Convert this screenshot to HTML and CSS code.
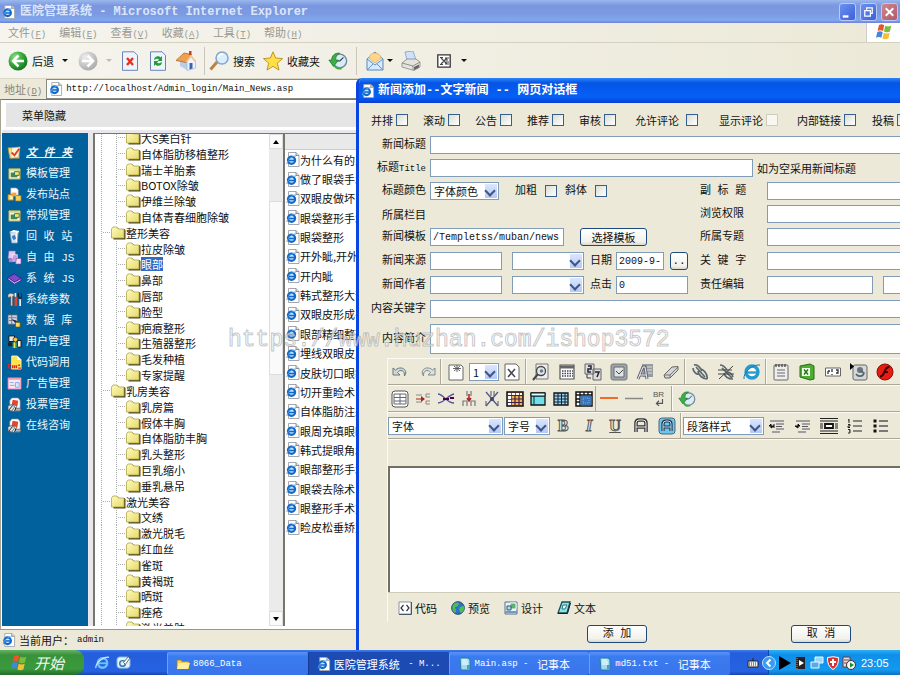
FILE: index.html
```html
<!DOCTYPE html>
<html lang="zh-CN">
<head>
<meta charset="utf-8">
<title>医院管理系统</title>
<link rel="stylesheet" href="styles.css">
</head>
<body>
<svg class="defs" aria-hidden="true">
  <defs>
    <linearGradient id="g-folder" x1="0" y1="0" x2="1" y2="1"><stop offset="0" stop-color="#fffbc0"/><stop offset="1" stop-color="#e6d966"/></linearGradient>
    <radialGradient id="g-green" cx=".35" cy=".3" r=".8"><stop offset="0" stop-color="#8fe08a"/><stop offset=".5" stop-color="#35a83a"/><stop offset="1" stop-color="#0d6b1c"/></radialGradient>
    <radialGradient id="g-gray" cx=".35" cy=".3" r=".8"><stop offset="0" stop-color="#eee"/><stop offset="1" stop-color="#a4a4a4"/></radialGradient>
  </defs>
  <symbol id="folder" viewBox="0 0 15 14"><path d="M2 4.500 1 3l1-1.500h4.500L8 3h5.500l1 1v9.500H2.500z" fill="#4d4a2a"/><path d="M.5 3 2 1h4l1.500 2H13v9H.5z" fill="url(#g-folder)" stroke="#a69b3e" stroke-width=".7"/></symbol>
  <symbol id="iedoc" viewBox="0 0 14 15"><path d="M2.500.5H10L13 3.500v11H2.500z" fill="#fff" stroke="#a3a7b0"/><path d="M10 .5v3h3" fill="#ddd" stroke="#777" stroke-width=".8"/><ellipse cx="5.500" cy="8.300" rx="3.600" ry="3.600" fill="#cfe6fb" stroke="#1268c8" stroke-width="2.200"/><path d="M3 8.500h6" stroke="#1268c8" stroke-width="1.600"/><path d="M.8 12C2 7 6 4 10 4" fill="none" stroke="#53a4ea" stroke-width="1"/></symbol>
  <symbol id="ie" viewBox="0 0 16 16"><circle cx="8" cy="8.500" r="5" fill="none" stroke="#6bc1ff" stroke-width="2.600"/><path d="M4 8.800h9" stroke="#6bc1ff" stroke-width="2"/><path d="M1 14C0 9 9 1 15 2.500" fill="none" stroke="#c5e8ff" stroke-width="1.200"/></symbol>
  <symbol id="flag" viewBox="0 0 18 18"><path d="M4 2c2-1 3.500-.8 5.200.3L8 8C6.500 7 4.500 7 2.600 7.800z" fill="#e8562c"/><path d="M10.200 2.800c2 1 3.800 1 6 0L15 8.500c-2 1-4 .9-6 0z" fill="#7dbb3c"/><path d="M2.300 9c2-1 3.800-.8 5.400.2l-1.300 5.600C5 14 3 13.800 1 14.800z" fill="#4386e0"/><path d="M8.700 9.700c2 1 4 1 6 0l-1.300 5.800c-2 1-4 .9-6 0z" fill="#f5c032"/></symbol>
  <symbol id="clock" viewBox="0 0 22 20"><circle cx="13" cy="10" r="7.500" fill="#d9ecf6" stroke="#71879a" stroke-width="1.500"/><path d="M13 10l4-4M13 10h-4" stroke="#345" stroke-width="1.200" fill="none"/><path d="M1 9h3c0-5 4-8.500 9-7.500C9 3 8.500 6 8.500 9h3l-5.500 7z" fill="#3fae47" stroke="#18722b" stroke-width=".8"/><path d="M7 15c1.500 3 5 4 8 3" fill="none" stroke="#3fae47" stroke-width="2"/></symbol>
  <symbol id="s-check" viewBox="0 0 16 16"><path d="M1 3h5l1 2h6v9H3z" fill="#f6e28b" stroke="#a98b2f" stroke-width=".8"/><path d="M5 3 14 2l-2 11-8 1z" fill="#fff6d5" stroke="#b98" stroke-width=".6"/><path d="m5 8 3 3 5-7" fill="none" stroke="#d8421f" stroke-width="2"/></symbol>
  <symbol id="s-tpl" viewBox="0 0 16 16"><path d="M2 3h12v11H2z" fill="#f8f5d4" stroke="#a79746"/><path d="M2 3h12v2H2z" fill="#c9d88a"/><path d="M4 7h7v5H4z" fill="#3b8a55"/><path d="M8 6h5v4H8z" fill="#f7e36b" stroke="#376"/></symbol>
  <symbol id="s-site" viewBox="0 0 16 16"><path d="M4 1h6l2 2v6H4z" fill="#fff" stroke="#999" stroke-width=".7"/><path d="M1 8h6v6H1zM9 9h6v6H9z" fill="#f5cf58" stroke="#96701b" stroke-width=".7"/><path d="M5 6h5v4H5z" fill="#f4a33c"/><path d="M3 10h3v3H3z" fill="#fff4c6"/></symbol>
  <symbol id="s-bin" viewBox="0 0 16 16"><path d="M3 3h9l-1 12H5z" fill="#d5e2ef" stroke="#8197ad" stroke-width=".8"/><path d="M3 3 7 1l6 1-1 2z" fill="#fff"/><path d="M5 8l3-2 2 4-3 2z" fill="#3c79c7"/><path d="M10 3v11" stroke="#fff"/></symbol>
  <symbol id="s-js" viewBox="0 0 16 16"><path d="M2 1h7v8H1z" fill="#e4c9f4" stroke="#8861a5" stroke-width=".7"/><path d="M6 5h5v7H5z" fill="#c79ae2" stroke="#fff" stroke-width=".7"/><path d="M10 9h5v6H9z" fill="#f0def9" stroke="#754b93" stroke-width=".7"/><path d="M2 9h4v4H2z" fill="#b280d3"/></symbol>
  <symbol id="s-book" viewBox="0 0 16 16"><path d="M1 7 8 3l7 5-7 4z" fill="#7a4cc9" stroke="#3c1a85" stroke-width=".8"/><path d="M1 7v2l7 5 7-4V8l-7 4z" fill="#d9c8ff" stroke="#3c1a85" stroke-width=".8"/></symbol>
  <symbol id="s-tools" viewBox="0 0 16 16"><path d="M1 3c3-3 5-1 7 0l-2 2v10H4V5L1 6z" fill="#ddd" stroke="#543" stroke-width=".6"/><path d="M8 5h3v10H8z" fill="#df4230"/><path d="M9 1v4M14 7v8" stroke="#eee" stroke-width="1.800"/><path d="M12 1v4l2 2 2-2V1" fill="none" stroke="#222" stroke-width="1.500"/></symbol>
  <symbol id="s-db" viewBox="0 0 16 16"><path d="M1 2h10v10H1z" fill="#cfd5e8" stroke="#555" stroke-width=".8"/><path d="M2 5h8M2 8h8M5 2v10" stroke="#667" stroke-width=".8"/><path d="m5 6 6 3-2 2z" fill="#141d66"/><path d="M9 10h5v5H9z" fill="#f5e05f" stroke="#665310" stroke-width=".8"/></symbol>
  <symbol id="s-user" viewBox="0 0 16 16"><path d="M2 2h6v6H2z" fill="#e7e7e7" stroke="#111"/><path d="M1 9h5v4H1z" fill="#222"/><circle cx="9" cy="6" r="2.500" fill="#f3c54b" stroke="#222" stroke-width=".7"/><path d="M6 9h6v6H6z" fill="#3aa75d"/><path d="M11 7h4v7h-4z" fill="#f4f4f4" stroke="#111"/><path d="M8 9v6" stroke="#f2e04e" stroke-width="1.500"/></symbol>
  <symbol id="s-code" viewBox="0 0 16 16"><path d="M5 1h6l4 4v10H5z" fill="#ffe34a" stroke="#fff" stroke-width=".8"/><path d="M11 1v4h4" fill="#fff"/><path d="M4 10c-3-1-4 4 0 4m2-3v3m2-3v3m2-3v3m2-3h2m-2 3h3" fill="none" stroke="#df2720" stroke-width="1.500"/></symbol>
  <symbol id="s-ad" viewBox="0 0 16 16"><path d="M1 2h14v12H1z" fill="#f8e8ef" stroke="#d59"/><path d="M1 2h14v2H1z" fill="#ef9bb6"/><path d="M3 7h4M3 10h5M9 7h4v5H9z" stroke="#8ba8dd" fill="#dbe6ff"/></symbol>
  <symbol id="s-vote" viewBox="0 0 16 16"><path d="M5 1h7l2 3v11H3V4z" fill="#fff" stroke="#888" stroke-width=".7"/><path d="m6 3 6 1-1 6-6-2z" fill="#e5472d"/><path d="m1 9 6-1 1 3-3 4-4-1zM9 12h6v2H9z" fill="#dbe2e8" stroke="#35424f" stroke-width=".8"/><path d="m2 14 4-5M10 10l-2 5" stroke="#222"/></symbol>
</svg>

<div class="browser">
  <header class="titlebar">
    <svg class="i14"><use href="#iedoc"/></svg>
    <h1>医院管理系统 - Microsoft Internet Explorer</h1>
    <div class="winbtns">
      <button type="button" aria-label="最小化"><svg viewBox="0 0 16 17"><path d="M3 12h6v2.500H3z" fill="#fff"/></svg></button>
      <button type="button" aria-label="还原"><svg viewBox="0 0 16 17"><path d="M6 6V4h6v6h-2M4 7h6v6H4z" fill="none" stroke="#fff" stroke-width="1.300"/></svg></button>
      <button type="button" class="close" aria-label="关闭"><svg viewBox="0 0 16 17"><path d="m4 4.500 8 8m0-8-8 8" stroke="#fff" stroke-width="2"/></svg></button>
    </div>
  </header>
  <nav class="menubar">
    <button type="button">文件<span>(<u>F</u>)</span></button>
    <button type="button">编辑<span>(<u>E</u>)</span></button>
    <button type="button">查看<span>(<u>V</u>)</span></button>
    <button type="button">收藏<span>(<u>A</u>)</span></button>
    <button type="button">工具<span>(<u>T</u>)</span></button>
    <button type="button">帮助<span>(<u>H</u>)</span></button>
    <span class="throbber"><svg class="i18"><use href="#flag"/></svg></span>
  </nav>
  <div class="toolbar">
    <button type="button" class="t-back"><svg class="i20" viewBox="0 0 20 20"><circle cx="10" cy="10" r="9.500" fill="url(#g-green)"/><path d="M10.500 4.500 5 10l5.500 5.500M5.500 10H16" fill="none" stroke="#fff" stroke-width="2.500"/></svg>后退<i class="caret"></i></button>
    <button type="button" class="t-fwd" aria-label="前进"><svg class="i20" viewBox="0 0 20 20"><circle cx="10" cy="10" r="9.500" fill="url(#g-gray)"/><path d="M9.500 4.500 15 10l-5.500 5.500M14.500 10H4" fill="none" stroke="#fff" stroke-width="2.500"/></svg><i class="caret dim"></i></button>
    <button type="button" class="t-ico" aria-label="停止"><svg class="i20" viewBox="0 0 20 20"><path d="M2.500.8H14l3.500 3.500v15h-15z" fill="#eef4fd" stroke="#6d83b5"/><path d="m7 7 6 7m0-7-6 7" stroke="#e8301c" stroke-width="2.400"/></svg></button>
    <button type="button" class="t-ico" aria-label="刷新"><svg class="i20" viewBox="0 0 20 20"><path d="M2.500.8H14l3.500 3.500v15h-15z" fill="#eef4fd" stroke="#6d83b5"/><path d="M6 9c0-4 5-5 6.500-2.500L14 5v5H9.500l1.500-1.500C10 7 7.500 8 6 9zM14 11c0 4-5 5-6.500 2.500L6 15v-5h4.500L9 11.500c1 1.500 3.500.5 5-.5z" fill="#249a38"/></svg></button>
    <button type="button" class="t-ico" aria-label="主页"><svg class="i20" viewBox="0 0 20 20"><path d="M4 9v6l7 4V10z" fill="#b9cdec"/><path d="M11 10 15.500 5l4 5v7L11 19.500z" fill="#eef4ff" stroke="#8fa9cf" stroke-width=".6"/><path d="M0 9.500 8 2l7.500 1.500-5.500 8z" fill="#efa04e" stroke="#a75f22" stroke-width=".7"/><path d="M13 0h2.500v4H13z" fill="#c94032"/><path d="m15 3.500 5 7-1.500.5-3.500-4.500-4 5-1.500-.5z" fill="#f7c68c"/><path d="M13.500 12h3v5.500l-3 1z" fill="#3666a7"/></svg></button>
    <span class="sep"></span>
    <button type="button" class="t-txt"><svg class="i20" viewBox="0 0 20 20"><path d="m1.500 18.500 7-8" stroke="#ba8345" stroke-width="3"/><circle cx="13" cy="7" r="6" fill="#d9efff" stroke="#87a5c9" stroke-width="1.500"/><path d="M9.500 6C10 4 12 3 14 3.500" fill="none" stroke="#fff" stroke-width="1.500"/></svg>搜索</button>
    <button type="button" class="t-txt"><svg class="i20" viewBox="0 0 20 20"><path d="m10 .8 2.600 6.200 7 .6-5.300 4.500 1.700 7-6-3.800-6 3.800 1.700-7L.4 7.600l7-.6z" fill="#ffdf48" stroke="#b98d1c" stroke-width=".9"/></svg>收藏夹</button>
    <button type="button" class="t-ico" aria-label="历史"><svg class="i20"><use href="#clock"/></svg></button>
    <span class="sep"></span>
    <button type="button" class="t-mail" aria-label="邮件"><svg class="i20" viewBox="0 0 20 20"><path d="M2 8 10 1l8 7v11H2z" fill="#d8eafc" stroke="#5d87b9"/><path d="M4 7c0-3 3-5 6-5s6 2 6 5l-6 5z" fill="#ffd58c" stroke="#e0a050" stroke-width=".6"/><path d="m2 8 8 6 8-6M2 19l6-6m10 6-6-6" fill="none" stroke="#5d97d1"/></svg><i class="caret"></i></button>
    <button type="button" class="t-print" aria-label="打印"><svg class="i20" viewBox="0 0 20 20"><path d="M4 1l8-1 3 9H6z" fill="#cfe2fb" stroke="#7f9cc5" stroke-width=".8"/><path d="m1 12 5-4h9l4 3v5l-6 3.500L1 16z" fill="#e3e3e0" stroke="#858580" stroke-width=".8"/><path d="M1 12l11 3 7-4M12 15v4" fill="none" stroke="#90908a"/><path d="m13 16 5-2.500v3L13 19z" fill="#666"/></svg></button>
    <button type="button" class="t-excel" aria-label="用 Excel 编辑"><svg class="i14" viewBox="0 0 14 14"><path d="M.8.8h12.400v12.400H.8z" fill="#fff" stroke="#333" stroke-width="1.300"/><path d="m4 4 6 6M10 4l-6 6M3 3.500h3M3 10.500h3M8 4h4M8 6h3M8 8h4M8 10h4" stroke="#444" stroke-width="1.100"/></svg></button>
    <i class="caret"></i>
  </div>
  <div class="address">
    <label for="url">地址<span>(<u>D</u>)</span></label>
    <div class="urlbox"><svg class="i14"><use href="#iedoc"/></svg><input id="url" type="text" value="http://localhost/Admin_login/Main_News.asp"></div>
  </div>

  <div class="page">
    <div class="topframe"><button type="button">菜单隐藏</button></div>
    <div class="cols">
      <nav class="side">
        <a href="#" class="on"><svg class="i15"><use href="#s-check"/></svg><b>文 件 夹</b></a>
        <a href="#"><svg class="i15"><use href="#s-tpl"/></svg>模板管理</a>
        <a href="#"><svg class="i15"><use href="#s-site"/></svg>发布站点</a>
        <a href="#"><svg class="i15"><use href="#s-tpl"/></svg>常规管理</a>
        <a href="#"><svg class="i15"><use href="#s-bin"/></svg>回 收 站</a>
        <a href="#"><svg class="i15"><use href="#s-js"/></svg>自 由 JS</a>
        <a href="#"><svg class="i15"><use href="#s-book"/></svg>系 统 JS</a>
        <a href="#"><svg class="i15"><use href="#s-tools"/></svg>系统参数</a>
        <a href="#"><svg class="i15"><use href="#s-db"/></svg>数 据 库</a>
        <a href="#"><svg class="i15"><use href="#s-user"/></svg>用户管理</a>
        <a href="#"><svg class="i15"><use href="#s-code"/></svg>代码调用</a>
        <a href="#"><svg class="i15"><use href="#s-ad"/></svg>广告管理</a>
        <a href="#"><svg class="i15"><use href="#s-vote"/></svg>投票管理</a>
        <a href="#"><svg class="i15"><use href="#s-vote"/></svg>在线咨询</a>
      </nav>
      <div class="treepane">
        <ul class="tree">
          <li class="sub"><svg><use href="#folder"/></svg><span>大S美白针</span></li>
          <li class="sub"><svg><use href="#folder"/></svg><span>自体脂肪移植整形</span></li>
          <li class="sub"><svg><use href="#folder"/></svg><span>瑞士羊胎素</span></li>
          <li class="sub"><svg><use href="#folder"/></svg><span>BOTOX除皱</span></li>
          <li class="sub"><svg><use href="#folder"/></svg><span>伊维兰除皱</span></li>
          <li class="sub"><svg><use href="#folder"/></svg><span>自体青春细胞除皱</span></li>
          <li><svg><use href="#folder"/></svg><span>整形美容</span></li>
          <li class="sub"><svg><use href="#folder"/></svg><span>拉皮除皱</span></li>
          <li class="sub"><svg><use href="#folder"/></svg><span class="sel">眼部</span></li>
          <li class="sub"><svg><use href="#folder"/></svg><span>鼻部</span></li>
          <li class="sub"><svg><use href="#folder"/></svg><span>唇部</span></li>
          <li class="sub"><svg><use href="#folder"/></svg><span>脸型</span></li>
          <li class="sub"><svg><use href="#folder"/></svg><span>疤痕整形</span></li>
          <li class="sub"><svg><use href="#folder"/></svg><span>生殖器整形</span></li>
          <li class="sub"><svg><use href="#folder"/></svg><span>毛发种植</span></li>
          <li class="sub"><svg><use href="#folder"/></svg><span>专家提醒</span></li>
          <li><svg><use href="#folder"/></svg><span>乳房美容</span></li>
          <li class="sub"><svg><use href="#folder"/></svg><span>乳房篇</span></li>
          <li class="sub"><svg><use href="#folder"/></svg><span>假体丰胸</span></li>
          <li class="sub"><svg><use href="#folder"/></svg><span>自体脂肪丰胸</span></li>
          <li class="sub"><svg><use href="#folder"/></svg><span>乳头整形</span></li>
          <li class="sub"><svg><use href="#folder"/></svg><span>巨乳缩小</span></li>
          <li class="sub"><svg><use href="#folder"/></svg><span>垂乳悬吊</span></li>
          <li><svg><use href="#folder"/></svg><span>激光美容</span></li>
          <li class="sub"><svg><use href="#folder"/></svg><span>文绣</span></li>
          <li class="sub"><svg><use href="#folder"/></svg><span>激光脱毛</span></li>
          <li class="sub"><svg><use href="#folder"/></svg><span>红血丝</span></li>
          <li class="sub"><svg><use href="#folder"/></svg><span>雀斑</span></li>
          <li class="sub"><svg><use href="#folder"/></svg><span>黄褐斑</span></li>
          <li class="sub"><svg><use href="#folder"/></svg><span>晒斑</span></li>
          <li class="sub"><svg><use href="#folder"/></svg><span>痤疮</span></li>
          <li class="sub"><svg><use href="#folder"/></svg><span>激光美肤</span></li>
        </ul>
        <div class="scroll"><i class="up"></i><i class="thumb"></i><i class="down"></i></div>
      </div>
      <div class="listpane">
        <div class="listhead"></div>
        <ul class="list">
          <li><svg><use href="#iedoc"/></svg>为什么有的人</li>
          <li><svg><use href="#iedoc"/></svg>做了眼袋手术</li>
          <li><svg><use href="#iedoc"/></svg>双眼皮做坏了</li>
          <li><svg><use href="#iedoc"/></svg>眼袋整形手术</li>
          <li><svg><use href="#iedoc"/></svg>眼袋整形</li>
          <li><svg><use href="#iedoc"/></svg>开外眦,开外眦</li>
          <li><svg><use href="#iedoc"/></svg>开内眦</li>
          <li><svg><use href="#iedoc"/></svg>韩式整形大部</li>
          <li><svg><use href="#iedoc"/></svg>双眼皮形成手</li>
          <li><svg><use href="#iedoc"/></svg>眼部精细整形</li>
          <li><svg><use href="#iedoc"/></svg>埋线双眼皮,</li>
          <li><svg><use href="#iedoc"/></svg>皮肤切口眼袋</li>
          <li><svg><use href="#iedoc"/></svg>切开重睑术</li>
          <li><svg><use href="#iedoc"/></svg>自体脂肪注射</li>
          <li><svg><use href="#iedoc"/></svg>眼周充填眼眶</li>
          <li><svg><use href="#iedoc"/></svg>韩式提眼角术</li>
          <li><svg><use href="#iedoc"/></svg>眼部整形手术</li>
          <li><svg><use href="#iedoc"/></svg>眼袋去除术</li>
          <li><svg><use href="#iedoc"/></svg>眼整形手术方</li>
          <li><svg><use href="#iedoc"/></svg>睑皮松垂矫正</li>
        </ul>
      </div>
    </div>
  </div>
  <footer class="status"><svg class="i14"><use href="#iedoc"/></svg>当前用户：<span>admin</span></footer>
</div>

<section class="dialog" role="dialog" aria-labelledby="dlg-title">
  <header class="dlgbar"><svg class="i14"><use href="#iedoc"/></svg><h2 id="dlg-title">新闻添加--文字新闻 -- 网页对话框</h2></header>
  <form class="dlgbody">
    <div class="checks">
      <label>并排<input type="checkbox"></label>
      <label>滚动<input type="checkbox"></label>
      <label>公告<input type="checkbox"></label>
      <label>推荐<input type="checkbox"></label>
      <label>审核<input type="checkbox"></label>
      <label class="wide">允许评论<input type="checkbox"></label>
      <label>显示评论<input type="checkbox" disabled></label>
      <label>内部链接<input type="checkbox"></label>
      <label>投稿<input type="checkbox"></label>
    </div>

    <div class="rows">
      <div class="row"><label class="lb" for="f1">新闻标题</label><input class="grow" id="f1" type="text"></div>
      <div class="row"><label class="lb" for="f2">标题<span class="en">Title</span></label><input class="w323" id="f2" type="text"><span class="note">如为空采用新闻标题</span></div>
      <div class="row two">
        <div class="cell"><label class="lb" for="f3">标题颜色</label><span class="dd w69"><select id="f3"><option>字体颜色</option></select></span>
          <label class="ck first">加粗<input type="checkbox"></label><label class="ck">斜体<input type="checkbox"></label></div>
        <label for="r3">副 标 题</label><input class="grow" id="r3" type="text">
      </div>
      <div class="row two">
        <div class="cell"><span class="lb">所属栏目</span></div>
        <label for="r4">浏览权限</label><input class="grow" id="r4" type="text">
      </div>
      <div class="row two">
        <div class="cell"><label class="lb" for="f5">新闻模板</label><input class="w133" id="f5" type="text" value="/Templetss/muban/news"><button type="button" class="btn pick">选择模板</button></div>
        <label for="r5">所属专题</label><input class="grow" id="r5" type="text">
      </div>
    </div>
    <div class="rows loose">
      <div class="row two">
        <div class="cell"><label class="lb" for="f6">新闻来源</label><input class="w72" id="f6" type="text"><span class="dd w72 off"><select aria-label="来源列表"><option></option></select></span><label class="mid" for="f6d">日期</label><input class="w48" id="f6d" type="text" value="2009-9-"><button type="button" class="btn dots">..</button></div>
        <label for="r6">关 键 字</label><input class="grow" id="r6" type="text">
      </div>
      <div class="row two">
        <div class="cell"><label class="lb" for="f7">新闻作者</label><input class="w72" id="f7" type="text"><span class="dd w72 off"><select aria-label="作者列表"><option></option></select></span><label class="mid" for="f7d">点击</label><input class="w72" id="f7d" type="text" value="0"></div>
        <label for="r7">责任编辑</label><div class="pair"><input id="r7" type="text"><input type="text" aria-label="编辑列表"></div>
      </div>
      <div class="row"><label class="lb" for="f8">内容关键字</label><input class="grow" id="f8" type="text"></div>
      <div class="row tall"><label class="lb" for="f9">内容简介</label><textarea class="grow" id="f9"></textarea></div>
    </div>

    <div class="editor">
      <div class="bar">
        <button type="button" aria-label="撤销"><svg viewBox="0 0 18 18"><path d="M1 5v7h7L5.500 9.500C8 6 13 7 12.500 13 17 7 9 2 3.500 7z" fill="#cfd8d8" stroke="#667a7c"/></svg></button>
        <button type="button" aria-label="重做"><svg viewBox="0 0 18 18"><path d="M17 5v7h-7l2.500-2.500C10 6 5 7 5.500 13 1 7 9 2 14.500 7z" fill="#dde0dc" stroke="#7f8c8c"/></svg></button>
        <i class="bsep"></i>
        <button type="button" aria-label="新建"><svg viewBox="0 0 18 18"><path d="M2 2h12l2 2v13H2z" fill="#fff" stroke="#666"/><path d="M7 3l6 5m0-5L7 8M10 2v7M6 5.500h8" stroke="#555" stroke-width=".9"/></svg></button>
        <span class="dd w30"><select aria-label="页"><option>1</option></select></span>
        <button type="button" aria-label="删除页"><svg viewBox="0 0 18 18"><path d="M2 1h11l3 3v13H2z" fill="#fff" stroke="#666"/><path d="m5 6 7 8m0-8-7 8" stroke="#445" stroke-width="1.500"/></svg></button>
        <i class="bsep"></i>
        <button type="button" aria-label="查找"><svg viewBox="0 0 18 18"><path d="M4 1h12v15H4z" fill="#eee" stroke="#777"/><circle cx="9" cy="8" r="4.500" fill="#dde9ec" stroke="#444" stroke-width="1.300"/><circle cx="9.500" cy="8" r="1.800" fill="#778"/><path d="m6 11-5 6" stroke="#444" stroke-width="2"/></svg></button>
        <button type="button" aria-label="日历"><svg viewBox="0 0 18 18"><path d="M2 2h14v14H2z" fill="#fff" stroke="#555" stroke-width="1.200"/><path d="M2 4h14" stroke="#666" stroke-width="3"/><path d="M4 8h11M4 10.500h11M4 13h11" stroke="#445" stroke-width="1.500" stroke-dasharray="1.500 1"/></svg></button>
        <button type="button" aria-label="替换"><svg viewBox="0 0 18 18"><path d="M1 1h9v10H1zM9 6h8v11H9z" fill="#ddd" stroke="#666"/><path d="M4 3h3v3H4v3h3M11 9h4l-2 5" fill="none" stroke="#223" stroke-width="1.500"/><path d="M3 11v4h4" fill="none" stroke="#335"/></svg></button>
        <button type="button" aria-label="全选"><svg viewBox="0 0 18 18"><rect x="1" y="1" width="16" height="16" rx="2" fill="#9ea7a7" stroke="#777"/><path d="M4 4h10v10H4z" fill="#dfe4e2" stroke="#667"/><path d="m6 8 3 3 4-4" fill="none" stroke="#444"/></svg></button>
        <button type="button" aria-label="清除格式"><svg viewBox="0 0 18 18"><path d="M6 1h11v13H7z" fill="#969d9f"/><path d="m2 16 5-12h2l2 12M4 12h6" fill="none" stroke="#667" stroke-width="3"/><path d="m2 16 5-12h2l2 12M4 12h6" fill="none" stroke="#eee" stroke-width="1"/><path d="M11 4h5M11 7h5M12 10h4" stroke="#ddd"/></svg></button>
        <button type="button" aria-label="擦除"><svg viewBox="0 0 18 18"><path d="m2 12 8-8 6-.5V7l-8 8H3z" fill="#d3d4d3" stroke="#666"/><path d="m2 12 6 0 8-8M8 12v3" fill="none" stroke="#777"/></svg></button>
        <i class="bsep"></i>
        <button type="button" aria-label="链接"><svg viewBox="0 0 18 18"><path d="M3 2c3-1 6 2 8 6M2 5c0 4 4 7 6 6M7 8c0 4 5 8 9 8M9 6c4 0 8 6 7 10M5 4l9 10" fill="none" stroke="#5b6870" stroke-width="1.700"/></svg></button>
        <button type="button" aria-label="取消链接"><svg viewBox="0 0 18 18"><path d="M3 2c3 0 5 2 7 5M5 5l10 10M7 10c1 4 5 6 9 6M10 9c3 0 5 2 6 5" fill="none" stroke="#5b6870" stroke-width="1.700"/><path d="M2 16 16 3M1 11h16M1 7h14" stroke="#444"/></svg></button>
        <button type="button" aria-label="浏览"><svg viewBox="0 0 18 18"><circle cx="9" cy="9" r="6" fill="#fff" stroke="#239ad2" stroke-width="3.300"/><path d="M4 9.500h12" stroke="#239ad2" stroke-width="2.300"/><path d="M1 16C0 10 9 1 17 2" fill="none" stroke="#187aaa"/></svg></button>
        <i class="bsep"></i>
        <button type="button" aria-label="记事本"><svg viewBox="0 0 18 18"><rect x="2" y="2" width="14" height="15" rx="1" fill="#eee" stroke="#666"/><path d="M4 1v3M7 1v3M10 1v3M13 1v3" stroke="#444" stroke-width="1.300"/><path d="M5 7h8M5 10h8M5 13h8" stroke="#666"/></svg></button>
        <button type="button" aria-label="Excel"><svg viewBox="0 0 18 18"><path d="M2 3 12 1l4 2v13l-4 1-10-3z" fill="#4eae30" stroke="#276d18"/><path d="M4 5h8v8H4z" fill="#f2ffe9"/><path d="m6 6.500 4 5m0-5-4 5" stroke="#257315" stroke-width="1.500"/></svg></button>
        <button type="button" aria-label="表单"><svg viewBox="0 0 18 18"><path d="M1.500 5h15v8h-15z" fill="#fff" stroke="#666"/><path d="M4 8v3M8 6v3M8 11v1M12 7h2v3h-2M4 8h2" stroke="#333" stroke-width="1.300" fill="none"/></svg></button>
        <button type="button" aria-label="媒体"><svg viewBox="0 0 18 18"><rect x="3" y="2" width="14" height="15" rx="2" fill="#d4d8da" stroke="#666"/><path d="M0 0v7l4-3.500z" fill="#000"/><circle cx="10" cy="7" r="3" fill="#68737d"/><path d="M6 11c2 3 7 3 8-1l-3-2" fill="none" stroke="#566" stroke-width="1.600"/></svg></button>
        <button type="button" aria-label="Flash"><svg viewBox="0 0 18 18"><circle cx="9" cy="9" r="8" fill="#e61b12" stroke="#8d0d08"/><path d="M13.500 4C9 4 9 8 8 10s-2 3.500-4 3.500M8 9h4" fill="none" stroke="#300" stroke-width="2"/></svg></button>
      </div>
      <div class="bar tight">
        <button type="button" aria-label="表格"><svg viewBox="0 0 18 18"><rect x="1" y="1" width="16" height="16" rx="3" fill="#fff" stroke="#555"/><path d="M3 4h12v10H3zM9 4v10M3 7.500h12M3 11h12" fill="none" stroke="#667"/></svg></button>
        <button type="button" aria-label="合并左"><svg viewBox="0 0 18 18"><path d="M2 5h6M2 12h6M16 4h-4v3h4M16 11h-4v3h4" fill="none" stroke="#888"/><path d="M2 9h6" stroke="#a22"/><path d="m7 6 4 3-4 3z" fill="#a22"/></svg></button>
        <button type="button" aria-label="拆分单元格"><svg viewBox="0 0 18 18"><path d="M1 4c5 0 9 9 16 9M1 13c6 0 10-8 16-9" fill="none" stroke="#559" stroke-width="1.300"/><path d="M6 9h6M13 8h4" stroke="#404" stroke-width="2"/></svg></button>
        <button type="button" aria-label="合并下"><svg viewBox="0 0 18 18"><path d="M7 1v5M11 1v5M3 16v-5h4v5M11 16v-5h4v5" fill="none" stroke="#777" stroke-width="1.200"/><path d="M9 4v7m-2-3 2 3 2-3" stroke="#a22" stroke-width="1.500" fill="none"/></svg></button>
        <button type="button" aria-label="拆分行"><svg viewBox="0 0 18 18"><path d="m3 2 12 14M15 2 3 16" stroke="#559" stroke-width="1.300"/><path d="M8 1v5M11 1v5M3 16v-5M15 16v-5" stroke="#555"/><circle cx="9" cy="9" r="2" fill="#445"/></svg></button>
        <button type="button" aria-label="表格属性"><svg viewBox="0 0 18 18"><path d="M1 2h16v14H1z" fill="#f6b24a" stroke="#111" stroke-width="1.500"/><path d="M1 5.500h16M1 9h16M1 12.500h16M5 2v14M9 2v14M13 2v14" stroke="#402050" stroke-width="1.200"/><path d="M2 3h3v2H2zM6 3h3v2H6zM10 3h3v2h-3zM14 3h2v2h-2zM2 6h3v3H2zM2 10h3v2H2zM2 13h3v2H2z" fill="#fff"/></svg></button>
        <button type="button" aria-label="单元格属性"><svg viewBox="0 0 18 18"><path d="M2 3h14v12H2z" fill="#6fe0ea" stroke="#111" stroke-width="1.300"/><path d="M2 6h14M5 3v12" stroke="#133"/><path d="M2 3h14v3H2z" fill="#dff" stroke="#111"/></svg></button>
        <button type="button" aria-label="插入列"><svg viewBox="0 0 18 18"><path d="M2 3h14v12H2z" fill="#9bd6f0" stroke="#111" stroke-width="1.300"/><path d="M2 6h14M2 9h14M2 12h14M6 3v12M9.500 3v12M13 3v12" stroke="#123"/></svg></button>
        <button type="button" aria-label="插入行"><svg viewBox="0 0 18 18"><path d="M1 2h16v14H1z" fill="#fff" stroke="#111" stroke-width="1.500"/><path d="M1 5h16M5 2v14M1 9h4M1 12h4M9 2v3M13 2v3" stroke="#111" stroke-width="1.300"/><path d="M5.500 6h11v9h-11z" fill="#3a75b7"/><path d="M8 8h6v5H8z" fill="none" stroke="#8ad" stroke-dasharray="1 1"/></svg></button>
        <i class="bsep slim"></i>
        <button type="button" class="w25" aria-label="彩色线"><svg viewBox="0 0 18 18"><path d="M0 8h18" stroke="#f36a2b" stroke-width="2"/></svg></button>
        <button type="button" class="w25" aria-label="水平线"><svg viewBox="0 0 18 18"><path d="M0 8.500h18" stroke="#888" stroke-width="1.500"/></svg></button>
        <button type="button" class="w25 br">BR<svg viewBox="0 0 10 8"><path d="M9 0v5H2m3-3L2 5l3 3" fill="none" stroke="#555" stroke-width="1.300"/></svg></button>
        <i class="bsep"></i>
        <button type="button" class="w25" aria-label="历史记录"><svg><use href="#clock"/></svg></button>
      </div>
      <div class="bar">
        <span class="dd w115"><select aria-label="字体"><option>字体</option></select></span><span class="dd w46"><select aria-label="字号"><option>字号</option></select></span>
        <button type="button" class="fmt"><b>B</b></button>
        <button type="button" class="fmt"><b><i>I</i></b></button>
        <button type="button" class="fmt"><b><u>U</u></b></button>
        <button type="button" aria-label="前景色"><svg viewBox="0 0 18 18"><path d="M4 15V6q0-3 3-3h4q3 0 3 3v9M4 10h10" fill="none" stroke="#333" stroke-width="3.500"/><path d="M4 15V6q0-3 3-3h4q3 0 3 3v9M4 10h10" fill="none" stroke="#eee" stroke-width="1"/></svg></button>
        <button type="button" aria-label="背景色"><svg viewBox="0 0 18 18"><rect x="1" y="1" width="16" height="16" rx="3" fill="#69c6ed" stroke="#567"/><path d="M5 14V7q0-3 3-3h2q3 0 3 3v7M5 10h8" fill="none" stroke="#234" stroke-width="3.200"/><path d="M5 14V7q0-3 3-3h2q3 0 3 3v7M5 10h8" fill="none" stroke="#bdf" stroke-width="1"/></svg></button>
        <i class="bsep"></i>
        <span class="dd w81"><select aria-label="段落样式"><option>段落样式</option></select></span>
        <button type="button" aria-label="减少缩进"><svg viewBox="0 0 18 18"><path d="M2 4h14M8 7h8M8 9.500h6M8 12h8M4 15h8" stroke="#556"/><path d="M6 7v4M6 9H1l2-2v4z" stroke="#111" fill="#111"/></svg></button>
        <button type="button" aria-label="增加缩进"><svg viewBox="0 0 18 18"><path d="M2 4h14M8 7h8M8 9.500h6M8 12h8M4 15h8" stroke="#556"/><path d="M1 9h5L4 7v4z" stroke="#111" fill="#111"/></svg></button>
        <button type="button" aria-label="图文混排"><svg viewBox="0 0 18 18"><path d="M0 1.500h18M0 4h18M0 14h18M0 16.500h18M0 7h3M0 9h3M0 11h3M15 7h3M15 9h3M15 11h3" stroke="#222" stroke-width="1.200"/><path d="M5 7h8v4H5z" fill="#fff" stroke="#111" stroke-width="1.800"/></svg></button>
        <button type="button" aria-label="编号列表"><svg viewBox="0 0 18 18"><path d="M7 4h9M7 9h9M7 14h9" stroke="#666" stroke-width="1.300"/><path d="M3 2v4M2 3h1M2 7.500h2v1.500H2v1.500h2M2 12.500h2V16H2M3 14h1" fill="none" stroke="#222"/></svg></button>
        <button type="button" aria-label="项目列表"><svg viewBox="0 0 18 18"><path d="M7 4h9M7 9h9M7 14h9" stroke="#555" stroke-width="1.500"/><path d="M1.500 2.500h3v3h-3zM1.500 7.500h3v3h-3zM1.500 12.500h3v3h-3z" fill="#111"/></svg></button>
      </div>
      <div class="barspace"></div>
      <textarea class="canvas" aria-label="正文"></textarea>
      <div class="modes">
        <button type="button"><svg viewBox="0 0 14 14"><path d="M1 1h12v12H1z" fill="#fff" stroke="#8a93a5"/><path d="M5.500 4 3 7l2.500 3M8.500 4 11 7l-2.500 3" fill="none" stroke="#334" stroke-width="1.200"/><path d="M13.500 1v12.500H1" fill="none" stroke="#456"/></svg>代码</button>
        <button type="button"><svg viewBox="0 0 14 14"><circle cx="7" cy="7" r="6.300" fill="#2f72c8" stroke="#1f3f78"/><path d="M2 4c2-3 5-3 6-2L7 5 4 6l1 4-1 2C1 10 1 6 2 4zM9 6l4-1c1 3-1 6-3 7l-2-3z" fill="#4fbf4b"/></svg>预览</button>
        <button type="button"><svg viewBox="0 0 14 14"><path d="M1 1h12v12H1z" fill="#e5f2f8" stroke="#55748d"/><path d="M6 2h6v6H6z" fill="#59b26d" stroke="#fff"/><path d="M3 5h4v4H3z" fill="#b5dcea" stroke="#357"/><path d="M1 11h12" stroke="#79b" stroke-width="2"/></svg>设计</button>
        <button type="button"><svg viewBox="0 0 14 14"><path d="M5 1h8l-3 11H1z" fill="#8fe3e6" stroke="#134f5c" stroke-width="1.300"/><path d="m6 4 4 0-2 4H5z" fill="#fff" stroke="#277"/><path d="M1 12.500h9.500L13.500 2" fill="none" stroke="#123"/></svg>文本</button>
      </div>
    </div>
    <div class="actions"><button type="button" class="btn">添 加</button><button type="button" class="btn">取 消</button></div>
  </form>
</section>

<div class="watermark" aria-hidden="true">https://www.huzhan.com/ishop3572</div>

<footer class="taskbar">
  <button type="button" class="start"><svg class="i18"><use href="#flag"/></svg>开始</button>
  <div class="quick">
    <svg class="i15"><use href="#ie"/></svg>
    <svg class="i15" viewBox="0 0 16 16"><rect x="1" y="2" width="14" height="12" rx="3" fill="#dff1fb" stroke="#79a9d2"/><circle cx="7" cy="9" r="3" fill="none" stroke="#3274a8" stroke-width="1.500"/><path d="m8 8 5-6 2 1-5 7z" fill="#fff" stroke="#345" stroke-width=".8"/></svg>
  </div>
  <div class="tasks">
    <button type="button"><svg class="i14" viewBox="0 0 14 14"><path d="M1 3h4l1 1.500h7V12H1z" fill="#f6cf4c" stroke="#a87a18" stroke-width=".7"/><path d="M2.500 6H14l-2 6H1z" fill="#fff0a0"/></svg><span class="en">8066_Data</span></button>
    <button type="button" class="active"><svg class="i14"><use href="#iedoc"/></svg>医院管理系统<span class="en"> - M...</span></button>
    <button type="button"><svg class="i14" viewBox="0 0 14 14"><path d="M2 1h8l2 2v10H3z" fill="#9fdcf0" stroke="#2b7da8"/><path d="M4 3h5M4 5h6M4 7h6" stroke="#fff"/><path d="M9 8h3v4H9z" fill="#4a9dc4"/></svg><span class="en">Main.asp - </span>记事本</button>
    <button type="button"><svg class="i14" viewBox="0 0 14 14"><path d="M2 1h8l2 2v10H3z" fill="#9fdcf0" stroke="#2b7da8"/><path d="M4 3h5M4 5h6M4 7h6" stroke="#fff"/><path d="M9 8h3v4H9z" fill="#4a9dc4"/></svg><span class="en">md51.txt - </span>记事本</button>
  </div>
  <svg class="kbd" viewBox="0 0 12 10"><path d="M1 3h10v6H1z" fill="#eee" stroke="#222"/><path d="M2 5h8M2 7h8" stroke="#333" stroke-dasharray="1 1"/><path d="M6 3V0" stroke="#222"/></svg>
  <div class="tray">
    <button type="button" aria-label="显示隐藏图标"><svg viewBox="0 0 14 14"><circle cx="7" cy="7" r="6.500" fill="#3a9bf2" stroke="#b8e2ff"/><path d="M8.500 3.500 5 7l3.500 3.500" fill="none" stroke="#fff" stroke-width="2"/></svg></button>
    <svg viewBox="0 0 14 14"><path d="M1 0v14l12-7z" fill="#000"/></svg>
    <svg viewBox="0 0 14 14"><path d="M2 1h9v12H2z" fill="#222"/><path d="m5 4 5 3-5 3z" fill="#fff"/><path d="M3 2v11" stroke="#b98" stroke-dasharray="1 1"/></svg>
    <svg viewBox="0 0 14 14"><path d="M5 1h8v6H5z" fill="#9fd3f9" stroke="#dff"/><path d="M1 6h8v6H1z" fill="#5fa8e8" stroke="#dff"/></svg>
    <svg viewBox="0 0 14 14"><path d="M1.500 1.500Q7 0 12.500 1.500 13 10 7 13.500 1 10 1.500 1.500z" fill="#d8322c" stroke="#fff"/><path d="M7 3v7M4 6h6" stroke="#fff" stroke-width="2"/></svg>
    <svg viewBox="0 0 14 14"><path d="M1 1h7v10H1z" fill="#ddd" stroke="#733"/><path d="M2 4h5M2 7h4" stroke="#844"/><circle cx="9" cy="9" r="4.500" fill="#f4f4f4" stroke="#333"/><path d="m8 6.500 4 2.500-4 2.500z" fill="#1b8a2c"/></svg>
    <time>23:05</time>
  </div>
</footer>
</body>
</html>
```

FILE: styles.css
```css
* { box-sizing: border-box; }

html, body { height: 100%; }

body {
  margin: 0;
  display: flex;
  flex-direction: column;
  overflow: hidden;
  font: 11px/14px "Noto Sans CJK SC", sans-serif;
  color: #111;
  background: #ece9d8;
}

h1, h2, ul { margin: 0; padding: 0; }
ul { list-style: none; }
button, input, select, textarea { margin: 0; font: inherit; color: inherit; }
button { padding: 0; border: 0; background: none; white-space: nowrap; }
svg { flex: none; }

.defs { position: absolute; width: 0; height: 0; }
.i14 { width: 14px; height: 14px; }
.i15 { width: 15px; height: 15px; }
.i18 { width: 18px; height: 18px; }
.i20 { width: 20px; height: 20px; }
.en { font-family: "Liberation Mono", monospace; font-size: 9px; white-space: pre; }

/* browser window */
.browser { flex: 1; min-height: 0; display: flex; flex-direction: column; }

.titlebar {
  height: 23px;
  display: flex;
  align-items: center;
  gap: 4px;
  padding: 0 2px;
  background: linear-gradient(#9ab8ee, #7a96df 25%, #7c9ae2 60%, #80a8ec 88%, #6f7fdc);
}
.titlebar h1 {
  flex: 1;
  font: bold 12px/16px "Liberation Mono", "Noto Sans CJK SC", monospace;
  color: #dce6fb;
}
.winbtns { display: flex; gap: 4px; }
.winbtns button {
  width: 17px;
  height: 18px;
  border: 1px solid #b9caf5;
  border-radius: 3px;
  background: linear-gradient(135deg, #6d90f0, #3a62d8);
}
.winbtns svg { display: block; width: 15px; height: 16px; }
.winbtns .close { background: linear-gradient(135deg, #cf8590, #b05a6a); }

.menubar {
  height: 20px;
  display: flex;
  align-items: center;
  gap: 13px;
  padding-left: 8px;
  color: #999890;
  background: linear-gradient(90deg, #f5f4ee, #ece9d8);
  border-bottom: 1px solid #d5d1c0;
}
.menubar span, .address label span { font: 9px "Liberation Mono", monospace; }
.menubar .throbber {
  width: 34px;
  height: 19px;
  margin-left: auto;
  background: #fff;
  border-left: 1px solid #ccc;
  text-align: center;
}

.toolbar {
  height: 36px;
  display: flex;
  align-items: center;
  padding-left: 8px;
  gap: 8px;
  background: linear-gradient(90deg, #f5f4ee, #ece9d8);
  border-bottom: 1px solid #dcd8c8;
}
.toolbar button { display: flex; align-items: center; }
.toolbar .sep { width: 1px; height: 28px; margin-right: -4px; background: #cbc7b6; }
.caret { border: 3px solid transparent; border-top-color: #111; border-bottom: 0; }
.caret.dim { border-top-color: #bbb; }
.toolbar .t-back { gap: 4px; margin-right: 2px; }
.toolbar .t-back .caret { margin-left: 4px; }
.toolbar .t-fwd { gap: 8px; }
.toolbar .t-txt { gap: 4px; }
.toolbar .t-mail { gap: 2px; margin-left: 4px; }
.toolbar .t-print { margin-right: 8px; }
.toolbar .t-excel { margin-right: 2px; }

.address { height: 20px; display: flex; align-items: center; gap: 4px; padding-left: 4px; color: #87857b; }
.address label { white-space: nowrap; }
.urlbox {
  flex: 1;
  height: 20px;
  display: flex;
  align-items: center;
  gap: 3px;
  padding-left: 2px;
  color: #111;
  background: #fff;
  border: 1px solid #8a8a80;
}
.urlbox input { flex: 1; border: 0; padding: 0; font: 9px "Liberation Mono", monospace; outline: 0; }

.page {
  flex: 1;
  min-height: 0;
  display: flex;
  flex-direction: column;
  padding: 3px 0 3px 1px;
  background: #fff;
  border-top: 1px solid #777568;
  border-left: 1px solid #a8a494;
}
.topframe { height: 24px; padding: 0 16px; margin-left: 4px; background: #e5e5e5; }
.topframe button { height: 24px; }
.cols { flex: 1; min-height: 0; display: flex; margin-top: 3px; padding-top: 3px; background: #e8e8ec; }

.side { width: 86px; display: flex; flex-direction: column; padding-top: 9px; background: #00619c; }
.side a {
  height: 21px;
  display: flex;
  align-items: center;
  gap: 4px;
  padding-left: 5px;
  color: #eef6fb;
  font-family: "Liberation Mono", "Noto Sans CJK SC", monospace;
  text-decoration: none;
  white-space: nowrap;
}
.side .on b { font-style: italic; text-decoration: underline; }

.treepane {
  width: 191px;
  display: flex;
  margin-left: 5px;
  overflow: hidden;
  background: #fff;
  border: solid #77756c;
  border-width: 1px 1px 0 2px;
}
.tree { flex: 1; display: grid; grid-auto-rows: 1fr; margin: -4px 0 -10px; }
.tree li {
  min-height: 0;
  display: flex;
  align-items: center;
  padding-left: 16px;
  white-space: nowrap;
  background:
    repeating-linear-gradient(#aaa 0 1px, transparent 1px 2px) 6px 0 / 1px 100% no-repeat,
    repeating-linear-gradient(90deg, #aaa 0 1px, transparent 1px 2px) 8px 50% / 7px 1px no-repeat;
}
.tree .sub {
  padding-left: 31px;
  background:
    repeating-linear-gradient(#aaa 0 1px, transparent 1px 2px) 6px 0 / 1px 100% no-repeat,
    repeating-linear-gradient(#aaa 0 1px, transparent 1px 2px) 21px 0 / 1px 100% no-repeat,
    repeating-linear-gradient(90deg, #aaa 0 1px, transparent 1px 2px) 23px 50% / 7px 1px no-repeat;
}
.tree svg { width: 15px; height: 14px; }
.tree .sel { color: #fff; background: #316ac5; }

.scroll { width: 14px; display: flex; flex-direction: column; background: #ebebeb; }
.scroll i { display: grid; place-items: center; background: #fafafa; border: 1px solid #ddd; }
.scroll .up, .scroll .down { height: 15px; }
.scroll .thumb { height: 174px; margin: 52px 0 auto; }
.scroll .up::before { content: ""; border: 3px solid transparent; border-bottom: 4px solid #000; border-top: 0; }
.scroll .down::before { content: ""; border: 3px solid transparent; border-top: 4px solid #000; border-bottom: 0; }

.listpane { flex: 1; background: #fff; border: solid #77756c; border-width: 1px 0 0 1px; overflow: hidden; }
.listhead { height: 16px; background: #e9e9e9; border-bottom: 1px solid #ccc; }
.list { height: 387px; display: grid; grid-auto-rows: 1fr; }
.list li { display: flex; align-items: center; padding-left: 1px; white-space: nowrap; }
.list svg { width: 14px; height: 15px; }

.status {
  height: 21px;
  display: flex;
  align-items: center;
  gap: 3px;
  padding-left: 2px;
  border-top: 1px solid #9a978a;
}
.status span { font: 9px "Liberation Mono", monospace; }

/* dialog window */
.dialog {
  position: absolute;
  top: 78px;
  left: 356px;
  right: 0;
  bottom: 25px;
  display: flex;
  flex-direction: column;
  overflow: hidden;
  background: #ece9d8;
  border-left: 3px solid #0a45e0;
  border-top-left-radius: 6px;
}
.dlgbar {
  height: 25px;
  flex: none;
  display: flex;
  align-items: center;
  gap: 3px;
  padding-left: 2px;
  background: linear-gradient(#2a86f8, #0654e4 20%, #0560f8 75%, #0a3fd0);
}
.dlgbar h2 {
  font: bold 12px/16px "Liberation Mono", "Noto Sans CJK SC", monospace;
  color: #fff;
  white-space: pre;
}
.dlgbody { flex: 1; min-height: 0; display: flex; flex-direction: column; }
.dlgbody label { white-space: nowrap; }

input[type="checkbox"] {
  appearance: none;
  flex: none;
  width: 12px;
  height: 12px;
  background: linear-gradient(135deg, #dcdcd4, #fff);
  border: 1px solid #35608c;
}
input[type="checkbox"]:disabled { border-color: #cfccbd; background: #f8f7f0; }

.checks {
  display: grid;
  grid-template-columns: repeat(4, 52px) 56px 84px 78px 75px auto;
  align-items: center;
  height: 33px;
  padding-left: 12px;
}
.checks label { display: flex; align-items: center; gap: 3px; }
.checks .wide { gap: 7px; }

.rows { display: grid; gap: 5px; }
.rows.loose { gap: 6px; margin-top: 6px; }
.row, .cell { display: flex; align-items: center; height: 18px; }
.row.tall { height: 30px; }
.row.two { display: grid; grid-template-columns: 341px 67px 1fr; }
.lb { width: 67px; margin-right: 4px; text-align: right; flex: none; }
.note { margin-left: 4px; }
.grow { flex: 1; min-width: 0; }
.row label { font-family: "Liberation Mono", "Noto Sans CJK SC", monospace; }
.row .en { font-size: 9px; }

.row input[type="text"], .row textarea {
  height: 18px;
  padding: 0 2px;
  background: #fff;
  border: 1px solid #7f9db9;
  border-radius: 0;
  font: 10px "Liberation Mono", monospace;
  outline: 0;
}
.row .grow[type="text"], .row textarea.grow { border-right: 0; }
.row textarea { height: 30px; resize: none; }

.w323 { width: 323px; }
.w133 { width: 134px; }
.w115 { width: 115px; }
.w81 { width: 81px; }
.w72 { width: 72px; }
.w69 { width: 69px; }
.w48 { width: 48px; }
.w46 { width: 46px; }
.w30 { width: 30px; }

.dd { position: relative; flex: none; height: 18px; }
.dd select {
  appearance: none;
  display: block;
  width: 100%;
  height: 18px;
  padding: 0 14px 0 3px;
  background: #fff;
  border: 1px solid #7f9db9;
  border-radius: 0;
  line-height: 14px;
}
.dd::before {
  content: "";
  position: absolute;
  inset: 2px 2px 2px auto;
  width: 12px;
  background: linear-gradient(#dbe6fe, #b4c8f6);
  pointer-events: none;
}
.dd::after {
  content: "";
  position: absolute;
  top: 5px;
  right: 5px;
  width: 6px;
  height: 6px;
  border: solid #3f5684;
  border-width: 0 2px 2px 0;
  transform: rotate(45deg);
  pointer-events: none;
}
.off { margin-left: 10px; }
.mid { margin: 0 4px 0 6px; }
.ck { display: flex; align-items: center; gap: 8px; margin-left: 8px; }
.ck.first { margin-left: 16px; }
.pair { display: flex; gap: 10px; }
.pair input { width: 106px; flex: none; }

.btn {
  height: 18px;
  background: linear-gradient(#fff, #f2f1ea 80%, #dcd8cc);
  border: 1px solid #1c4a80;
  border-radius: 3px;
}
.pick { width: 67px; margin-left: 16px; }
.dots { width: 18px; margin-left: 6px; font-family: "Liberation Mono", monospace; }

/* rich text editor */
.editor { flex: 1; min-height: 0; display: flex; flex-direction: column; margin: 4px 0 0 28px; border-left: 1px solid #fbfaf5; }
.bar {
  height: 27px;
  flex: none;
  display: flex;
  align-items: center;
  border-top: 1px solid #fbfaf5;
  border-bottom: 1px solid #aca899;
}
.bar button { width: 26px; flex: none; display: grid; place-items: center; }
.bar button svg { width: 18px; height: 18px; }
.bar.tight button { width: 23px; }
.bar.tight .w25 { width: 25px; }
.bar.tight .br { font: 8px/8px "Liberation Sans", sans-serif; color: #555; }
.bar .br svg { width: 10px; height: 7px; }
.bsep { flex: none; width: 3px; height: 25px; border-left: 1px solid #aca899; background: #fbfaf5; background-clip: content-box; padding-right: 1px; }
.bsep.slim { width: 1px; padding: 0; }
.bar .dd + .w46 { margin-left: 1px; }
.bar .fmt { font: 16px/18px "Liberation Serif", serif; color: #eee; -webkit-text-stroke: 1px #555; }
.barspace { height: 27px; flex: none; border-top: 1px solid #fbfaf5; }
.canvas {
  flex: 1;
  min-height: 0;
  resize: none;
  padding: 4px;
  background: #fff;
  border: solid #716f64;
  border-width: 2px 0 0 2px;
  border-radius: 0;
  outline: 0;
}
.modes { height: 30px; flex: none; display: flex; align-items: center; gap: 14px; padding-left: 10px; border-top: 1px solid #d0ccba; }
.modes button { display: flex; align-items: center; gap: 3px; }
.modes svg { width: 14px; height: 14px; }
.actions { flex: none; display: flex; gap: 144px; padding: 3px 0 7px 228px; }
.actions .btn { width: 60px; font-family: "Liberation Mono", "Noto Sans CJK SC", monospace; }

.watermark {
  position: absolute;
  top: 326px;
  left: 228px;
  font: 23px/28px "Liberation Mono", monospace;
  color: rgba(255, 255, 255, .6);
  -webkit-text-stroke: 1px rgba(150, 150, 150, .55);
  pointer-events: none;
}

/* taskbar */
.taskbar {
  position: relative;
  height: 25px;
  flex: none;
  display: flex;
  color: #fff;
  background: linear-gradient(#3d7cf0, #245edb 12%, #2562e2 85%, #1b45ae);
}
.start {
  width: 84px;
  display: flex;
  align-items: center;
  gap: 6px;
  padding-left: 10px;
  color: #f2fbef;
  font-size: 15px;
  font-style: italic;
  border-radius: 0 9px 9px 0;
  background: linear-gradient(#66b463, #38923a 20%, #3b9a3d 75%, #236e28);
}
.quick { width: 83px; display: flex; align-items: center; gap: 6px; padding-left: 11px; }
.tasks { flex: 1; display: flex; padding-top: 2px; }
.tasks button {
  flex: 1;
  min-width: 0;
  display: flex;
  align-items: center;
  gap: 3px;
  padding-left: 8px;
  overflow: hidden;
  border-radius: 2px;
  border-left: 1px solid #6b9ef7;
  background: linear-gradient(#5a93f7, #3b7bf0 20%, #3974ea);
}
.tasks .active { background: #1c4bb4; border-color: #143a92; }
.kbd { width: 12px; height: 10px; margin: 8px 10px 0 17px; }
.tray {
  width: 132px;
  display: flex;
  align-items: center;
  gap: 2px;
  margin-left: -1px;
  background: linear-gradient(#2bb0f6, #0f8ee8 20%, #129af0 80%, #0c70c4);
  border-left: 1px solid #0c4ba8;
}
.tray button { display: flex; margin-left: -7px; }
.tray svg { width: 14px; height: 14px; }
.tray time { margin-left: 3px; font: 11px "Liberation Sans", sans-serif; }
```
